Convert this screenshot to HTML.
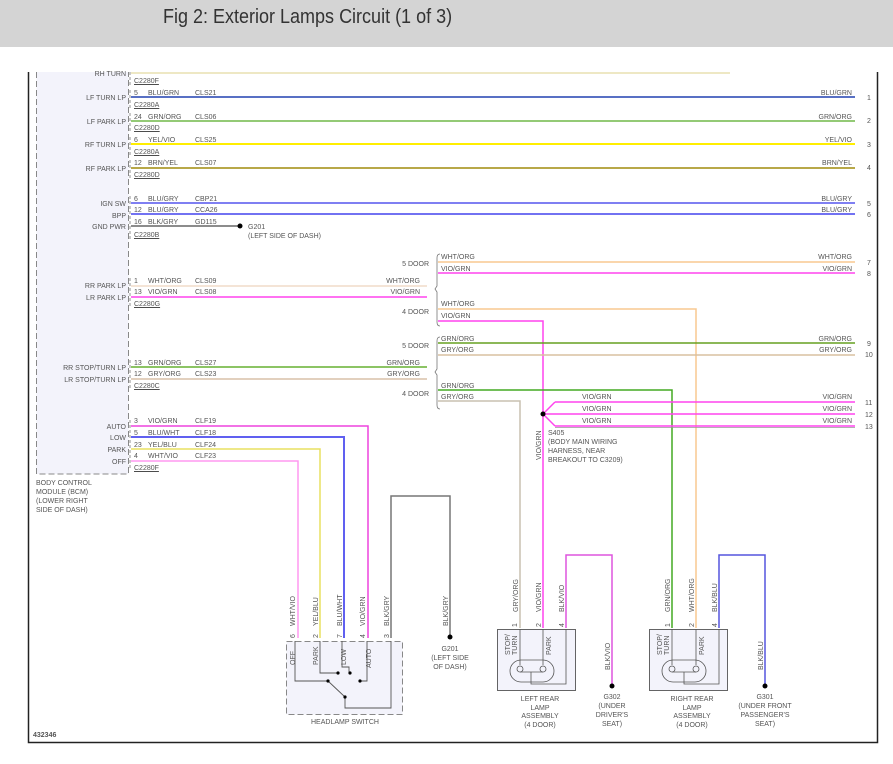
<!DOCTYPE html>
<html><head><meta charset="utf-8"><style>
html,body{margin:0;padding:0;background:#fff;width:893px;height:764px;overflow:hidden}
.hdr{position:absolute;left:0;top:0;width:893px;height:47px;background:#d4d4d4}
.hdr span{position:absolute;left:163px;top:6px;font:20px "Liberation Sans Narrow","Liberation Sans",sans-serif;color:#333;transform:scaleX(0.9);transform-origin:left}
svg{position:absolute;left:0;top:0}
text{font-family:"Liberation Sans",sans-serif;font-size:7px;fill:#555}
</style></head><body>
<div class="hdr"><span>Fig 2: Exterior Lamps Circuit (1 of 3)</span></div>
<svg width="893" height="764" viewBox="0 0 893 764">
<!-- frame -->
<path d="M28.5 72V742.5H877.5V72" fill="none" stroke="#222" stroke-width="1.5"/>
<!-- BCM box -->
<rect x="36.5" y="72" width="92" height="402" fill="#f3f3fb"/>
<path d="M36.5 72V474H128.5V72" fill="none" stroke="#888" stroke-dasharray="6,3"/>
<g text-anchor="end">
<text x="126" y="76">RH TURN</text>
<text x="126" y="100">LF TURN LP</text>
<text x="126" y="124">LF PARK LP</text>
<text x="126" y="147">RF TURN LP</text>
<text x="126" y="171">RF PARK LP</text>
<text x="126" y="206">IGN SW</text>
<text x="126" y="218">BPP</text>
<text x="126" y="229">GND PWR</text>
<text x="126" y="288">RR PARK LP</text>
<text x="126" y="300">LR PARK LP</text>
<text x="126" y="370">RR STOP/TURN LP</text>
<text x="126" y="382">LR STOP/TURN LP</text>
<text x="126" y="429">AUTO</text>
<text x="126" y="440">LOW</text>
<text x="126" y="452">PARK</text>
<text x="126" y="464">OFF</text>
</g>
<text x="36" y="485">BODY CONTROL</text>
<text x="36" y="494">MODULE (BCM)</text>
<text x="36" y="503">(LOWER RIGHT</text>
<text x="36" y="512">SIDE OF DASH)</text>
<g text-decoration="underline">
<text x="134" y="83">C2280F</text><text x="134" y="107">C2280A</text><text x="134" y="130">C2280D</text>
<text x="134" y="154">C2280A</text><text x="134" y="177">C2280D</text><text x="134" y="237">C2280B</text>
<text x="134" y="306">C2280G</text><text x="134" y="388">C2280C</text><text x="134" y="470">C2280F</text>
</g>
<g>
<text x="134" y="95">5</text><text x="148" y="95">BLU/GRN</text><text x="195" y="95">CLS21</text>
<text x="134" y="119">24</text><text x="148" y="119">GRN/ORG</text><text x="195" y="119">CLS06</text>
<text x="134" y="142">6</text><text x="148" y="142">YEL/VIO</text><text x="195" y="142">CLS25</text>
<text x="134" y="165">12</text><text x="148" y="165">BRN/YEL</text><text x="195" y="165">CLS07</text>
<text x="134" y="201">6</text><text x="148" y="201">BLU/GRY</text><text x="195" y="201">CBP21</text>
<text x="134" y="212">12</text><text x="148" y="212">BLU/GRY</text><text x="195" y="212">CCA26</text>
<text x="134" y="224">16</text><text x="148" y="224">BLK/GRY</text><text x="195" y="224">GD115</text>
<text x="134" y="283">1</text><text x="148" y="283">WHT/ORG</text><text x="195" y="283">CLS09</text>
<text x="134" y="294">13</text><text x="148" y="294">VIO/GRN</text><text x="195" y="294">CLS08</text>
<text x="134" y="365">13</text><text x="148" y="365">GRN/ORG</text><text x="195" y="365">CLS27</text>
<text x="134" y="376">12</text><text x="148" y="376">GRY/ORG</text><text x="195" y="376">CLS23</text>
<text x="134" y="423">3</text><text x="148" y="423">VIO/GRN</text><text x="195" y="423">CLF19</text>
<text x="134" y="435">5</text><text x="148" y="435">BLU/WHT</text><text x="195" y="435">CLF18</text>
<text x="134" y="447">23</text><text x="148" y="447">YEL/BLU</text><text x="195" y="447">CLF24</text>
<text x="134" y="458">4</text><text x="148" y="458">WHT/VIO</text><text x="195" y="458">CLF23</text>
</g>
<g text-anchor="end">
<text x="420" y="283">WHT/ORG</text><text x="420" y="294">VIO/GRN</text>
<text x="420" y="365">GRN/ORG</text><text x="420" y="376">GRY/ORG</text>
<text x="429" y="266">5 DOOR</text><text x="429" y="314">4 DOOR</text>
<text x="429" y="348">5 DOOR</text><text x="429" y="396">4 DOOR</text>
<text x="852" y="95">BLU/GRN</text><text x="852" y="119">GRN/ORG</text><text x="852" y="142">YEL/VIO</text>
<text x="852" y="165">BRN/YEL</text><text x="852" y="201">BLU/GRY</text><text x="852" y="212">BLU/GRY</text>
<text x="852" y="259">WHT/ORG</text><text x="852" y="271">VIO/GRN</text>
<text x="852" y="341">GRN/ORG</text><text x="852" y="352">GRY/ORG</text>
<text x="852" y="399">VIO/GRN</text><text x="852" y="411">VIO/GRN</text><text x="852" y="423">VIO/GRN</text>
</g>
<g>
<text x="867" y="100">1</text><text x="867" y="123">2</text><text x="867" y="147">3</text><text x="867" y="170">4</text>
<text x="867" y="206">5</text><text x="867" y="217">6</text><text x="867" y="265">7</text><text x="867" y="276">8</text>
<text x="867" y="346">9</text><text x="865" y="357">10</text><text x="865" y="405">11</text><text x="865" y="417">12</text><text x="865" y="429">13</text>
</g>
<g>
<text x="441" y="259">WHT/ORG</text><text x="441" y="271">VIO/GRN</text>
<text x="441" y="306">WHT/ORG</text><text x="441" y="318">VIO/GRN</text>
<text x="441" y="341">GRN/ORG</text><text x="441" y="352">GRY/ORG</text>
<text x="441" y="388">GRN/ORG</text><text x="441" y="399">GRY/ORG</text>
<text x="582" y="399">VIO/GRN</text><text x="582" y="411">VIO/GRN</text><text x="582" y="423">VIO/GRN</text>
<text x="548" y="435">S405</text><text x="548" y="444">(BODY MAIN WIRING</text>
<text x="548" y="453">HARNESS, NEAR</text><text x="548" y="462">BREAKOUT TO C3209)</text>
<text x="248" y="229">G201</text><text x="248" y="238">(LEFT SIDE OF DASH)</text>
</g>
<!-- connector marks -->
<g fill="none" stroke="#777" stroke-width="0.8">
<path d="M130 72v13M130 90v18M130 113v18M130 137v18M130 160v18M130 196v43M130 278v28M130 360v28M130 420v48" stroke-dasharray="3,2"/>
</g>
<!-- braces -->
<g fill="none" stroke="#777" stroke-width="0.8">
<path d="M440 254q-3 0-3 4v28l-2 3l2 3v30q0 4 3 4"/>
<path d="M440 337q-3 0-3 4v28l-2 3l2 3v30q0 4 3 4"/>
</g>
<!-- wires -->
<g fill="none" stroke-width="1.5">
<path d="M131 73H730" stroke="#e8e0b0"/>
<path d="M131 97H855" stroke="#2040b0"/>
<path d="M131 121H855" stroke="#70b848"/>
<path d="M131 144H855" stroke="#ffee00" stroke-width="2"/>
<path d="M131 168H855" stroke="#b8a848" stroke-width="2"/>
<path d="M131 203H855" stroke="#5555ee"/>
<path d="M131 214H855" stroke="#4444ee"/>
<path d="M131 226H238" stroke="#666"/>
<path d="M131 286H427" stroke="#f0dcc8"/>
<path d="M131 297H427" stroke="#ff44ee"/>
<path d="M438 262H855" stroke="#f8c890"/>
<path d="M438 273H855" stroke="#ff44ee"/>
<path d="M438 309H696V628" stroke="#f8c890"/>
<path d="M438 321H543V628" stroke="#ff44ee"/>
<path d="M131 367H427" stroke="#66b030"/>
<path d="M131 379H427" stroke="#d8c0a8"/>
<path d="M438 343H855" stroke="#66a020"/>
<path d="M438 355H855" stroke="#d8c0a0"/>
<path d="M438 390H672V628" stroke="#44aa22"/>
<path d="M438 401H520V628" stroke="#c8c0b0"/>
<path d="M555 402H855M543 414H855M555 426H855M543 414l12-12M543 414l12 12" stroke="#ff44ee"/>
<path d="M555 427.5H855" stroke="#999" stroke-width="0.8"/>
<path d="M131 426H368V638" stroke="#ee44dd"/>
<path d="M131 437H344V638" stroke="#6060f0" stroke-width="2"/>
<path d="M131 449H320V638" stroke="#e8e060"/>
<path d="M131 461H298V638" stroke="#ff99f0"/>
<path d="M391 638V496H450V637" stroke="#777"/>
<path d="M566 628V555H612V685" stroke="#dd55dd"/>
<path d="M719 628V555H765V685" stroke="#5555dd"/>
</g>
<circle cx="240" cy="226" r="2.5" fill="#000"/>
<circle cx="543" cy="414" r="2.5" fill="#000"/>
<!-- headlamp switch -->
<rect x="286.5" y="641.5" width="116" height="73" fill="#f3f3fb" stroke="#888" stroke-dasharray="6,3"/>
<g fill="none" stroke="#555" stroke-width="0.9">
<path d="M295 641V681H328M320 641V673H338M342 641V667H349V673M367 641V681H360M328 681L345 697M391 641V708H345V697"/>
</g>
<g fill="#000"><circle cx="328" cy="681" r="1.6"/><circle cx="338" cy="673" r="1.6"/><circle cx="350" cy="673" r="1.6"/><circle cx="360" cy="681" r="1.6"/><circle cx="345" cy="697" r="1.6"/><circle cx="450" cy="637" r="2.5"/><circle cx="612" cy="686" r="2.5"/><circle cx="765" cy="686" r="2.5"/></g>
<text x="311" y="724">HEADLAMP SWITCH</text>
<!-- lamps -->
<g fill="#f3f3fb" stroke="#555" stroke-width="0.9">
<rect x="497.5" y="629.5" width="78" height="61"/>
<rect x="649.5" y="629.5" width="78" height="61"/>
</g>
<g fill="none" stroke="#555" stroke-width="0.8">
<path d="M520 629V665M543 629V665M566 629V684H531V672"/>
<rect x="510" y="660" width="44" height="22" rx="11"/>
<circle cx="520" cy="669" r="3"/><circle cx="543" cy="669" r="3"/>
<path d="M520 672H543"/>
<path d="M672 629V665M696 629V665M719 629V684H684V672"/>
<rect x="662" y="660" width="44" height="22" rx="11"/>
<circle cx="672" cy="669" r="3"/><circle cx="696" cy="669" r="3"/>
<path d="M672 672H696"/>
</g>
<g text-anchor="middle">
<text x="540" y="701">LEFT REAR</text><text x="540" y="710">LAMP</text><text x="540" y="718">ASSEMBLY</text><text x="540" y="727">(4 DOOR)</text>
<text x="692" y="701">RIGHT REAR</text><text x="692" y="710">LAMP</text><text x="692" y="718">ASSEMBLY</text><text x="692" y="727">(4 DOOR)</text>
<text x="450" y="651">G201</text><text x="450" y="660">(LEFT SIDE</text><text x="450" y="669">OF DASH)</text>
<text x="612" y="699">G302</text><text x="612" y="708">(UNDER</text><text x="612" y="717">DRIVER'S</text><text x="612" y="726">SEAT)</text>
<text x="765" y="699">G301</text><text x="765" y="708">(UNDER FRONT</text><text x="765" y="717">PASSENGER'S</text><text x="765" y="726">SEAT)</text>
</g>
<!-- vertical labels -->
<g font-size="7">
<text transform="translate(295,626) rotate(-90)">WHT/VIO</text>
<text transform="translate(318,626) rotate(-90)">YEL/BLU</text>
<text transform="translate(342,626) rotate(-90)">BLU/WHT</text>
<text transform="translate(365,626) rotate(-90)">VIO/GRN</text>
<text transform="translate(389,626) rotate(-90)">BLK/GRY</text>
<text transform="translate(448,626) rotate(-90)">BLK/GRY</text>
<text transform="translate(518,612) rotate(-90)">GRY/ORG</text>
<text transform="translate(541,612) rotate(-90)">VIO/GRN</text>
<text transform="translate(564,612) rotate(-90)">BLK/VIO</text>
<text transform="translate(610,670) rotate(-90)">BLK/VIO</text>
<text transform="translate(670,612) rotate(-90)">GRN/ORG</text>
<text transform="translate(694,612) rotate(-90)">WHT/ORG</text>
<text transform="translate(717,612) rotate(-90)">BLK/BLU</text>
<text transform="translate(763,670) rotate(-90)">BLK/BLU</text>
<text transform="translate(541,460) rotate(-90)">VIO/GRN</text>
<text transform="translate(295,665) rotate(-90)">OFF</text>
<text transform="translate(318,665) rotate(-90)">PARK</text>
<text transform="translate(346,665) rotate(-90)">LOW</text>
<text transform="translate(371,668) rotate(-90)">AUTO</text>
<text transform="translate(510,655) rotate(-90)">STOP/</text>
<text transform="translate(517,655) rotate(-90)">TURN</text>
<text transform="translate(551,655) rotate(-90)">PARK</text>
<text transform="translate(662,655) rotate(-90)">STOP/</text>
<text transform="translate(669,655) rotate(-90)">TURN</text>
<text transform="translate(704,655) rotate(-90)">PARK</text>
<text transform="translate(295,638) rotate(-90)">6</text>
<text transform="translate(318,638) rotate(-90)">2</text>
<text transform="translate(342,638) rotate(-90)">7</text>
<text transform="translate(365,638) rotate(-90)">4</text>
<text transform="translate(389,638) rotate(-90)">3</text>
<text transform="translate(517,627) rotate(-90)">1</text>
<text transform="translate(541,627) rotate(-90)">2</text>
<text transform="translate(564,627) rotate(-90)">4</text>
<text transform="translate(670,627) rotate(-90)">1</text>
<text transform="translate(694,627) rotate(-90)">2</text>
<text transform="translate(717,627) rotate(-90)">4</text>
</g>
<text x="33" y="737" font-weight="bold" fill="#333">432346</text>
</svg>
</body></html>
